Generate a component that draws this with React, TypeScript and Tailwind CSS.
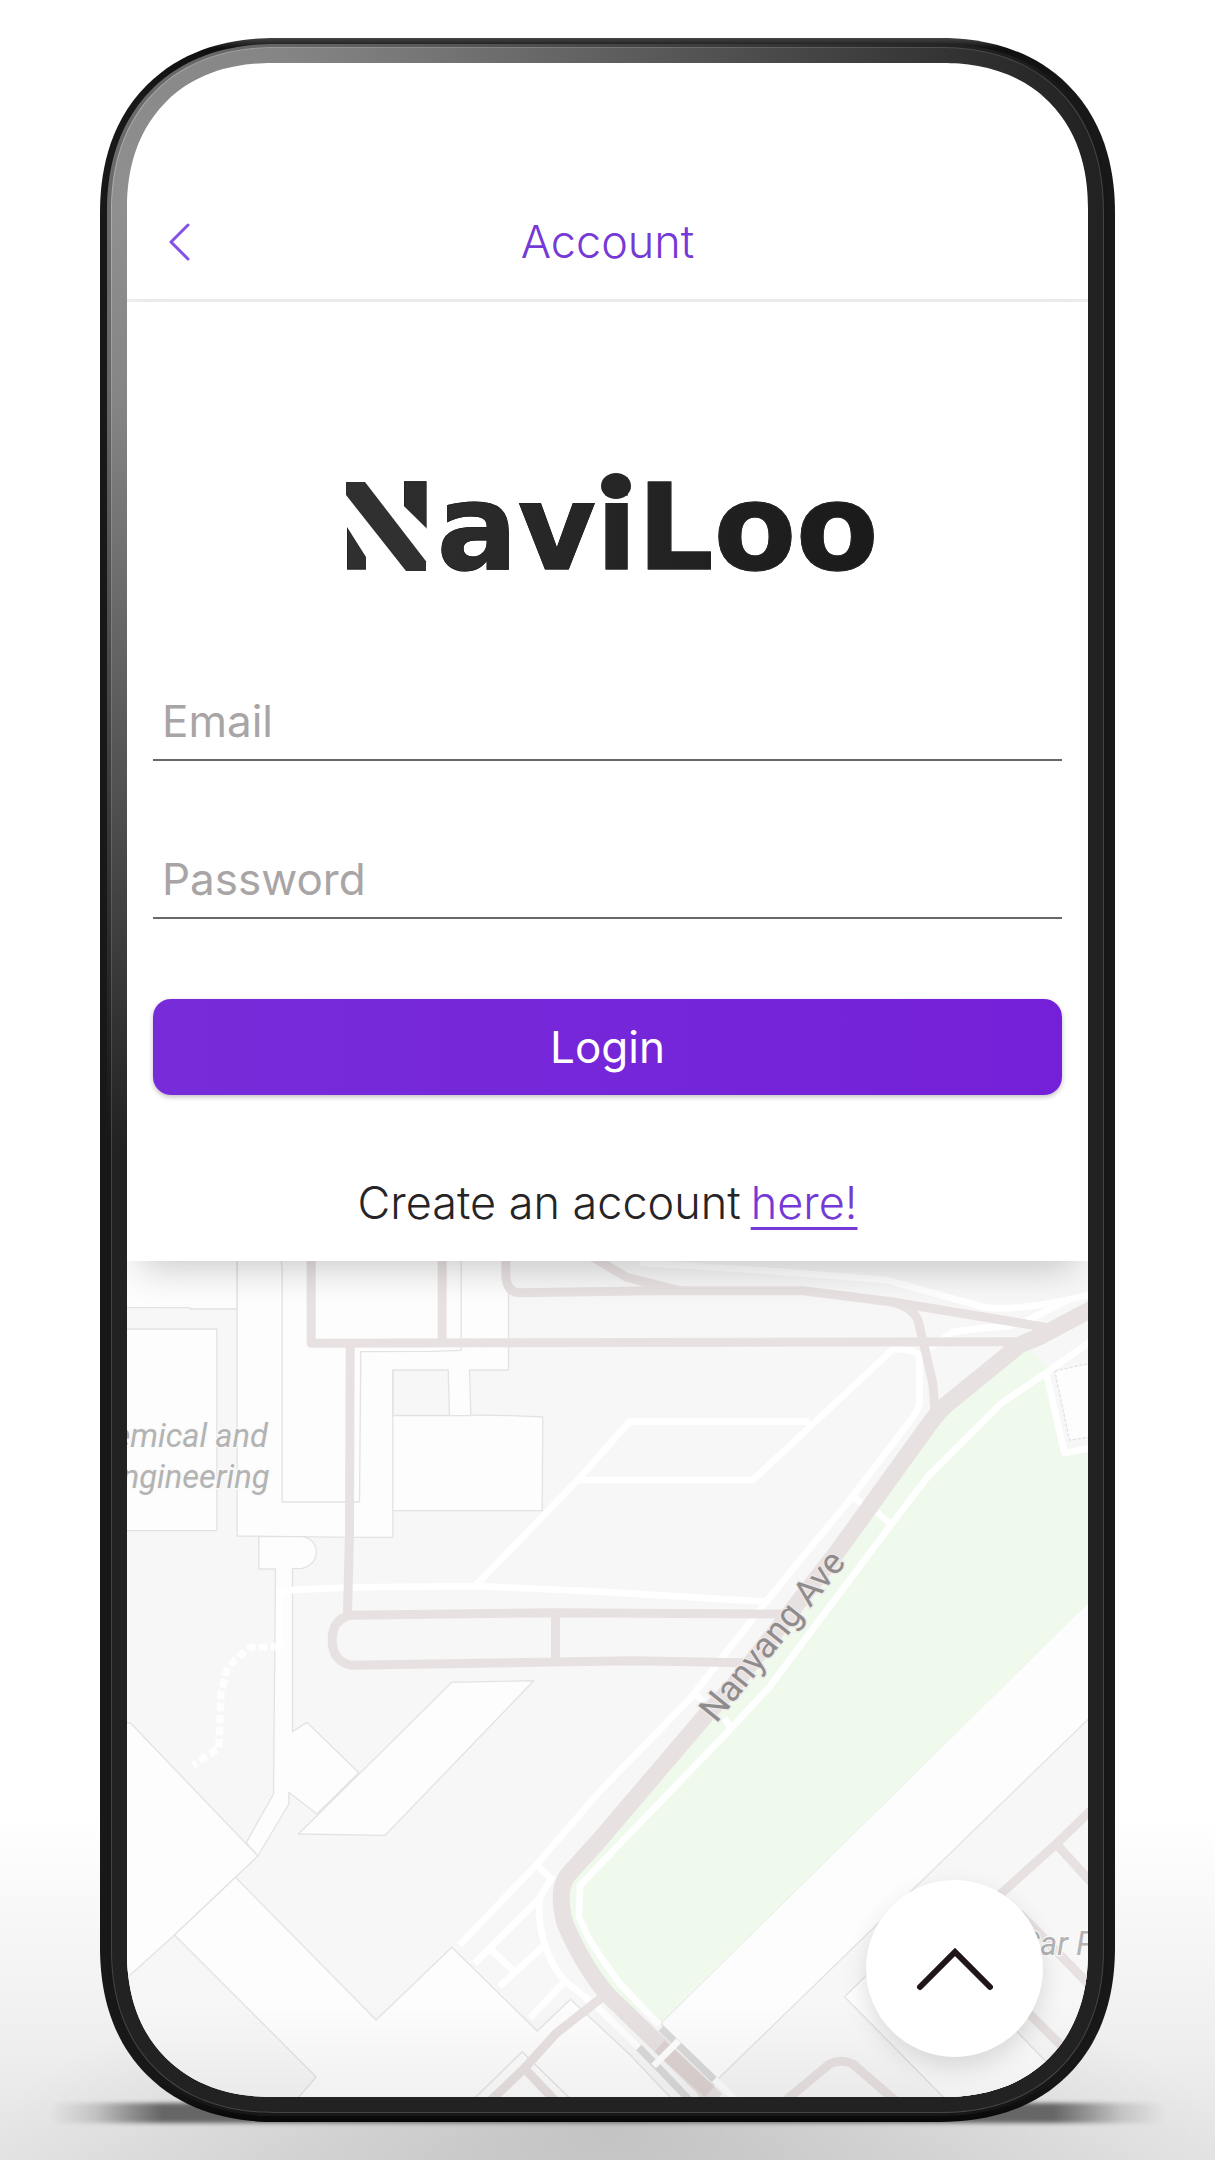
import React from "react";

const ROAD = "#e8e1e1";

function Buildings() {
  return (
    <g fill="#fdfdfd" stroke="#e3e3e3" strokeWidth="4" strokeLinejoin="round">
      <path d="M0 40H353V207H212V203H0Z" />
      <path d="M0 267H292V872H0Z" />
      <path d="M353 40H1167V390H1050L1054 525L1175 527L1270 531L1268 812H820V892H704L353 888Z" />
      <path d="M820 390H986L990 526H820Z" fill="#f7f7f7" />
      <path d="M820 527H1054M820 390V812M484 40L488 90V786H720L724 335L935 334L1025 331V40" fill="none" />
      <path d="M418 890V987H468L462 1662L380 1808L415 1848L508 1692V1657L592 1722L718 1598L562 1447L519 1475V986H545Q590 975 590 936Q590 900 550 890Z" />
      <path d="M0 1449H33L415 1848L348 1912L165 2085L21 2215H0Z" />
      <path d="M165 2085L348 1912L770 2340L997 2122L1253 2373L1353 2278L1530 2443L1660 2580H530L590 2511Z" />
      <path d="M1066 2574L1208 2435L1350 2574" fill="none" />
      <path d="M997 1327L1243 1322L797 1786L537 1782Z" />
      <path d="M2920 1072V1424L1740 2571L1625 2348Z" />
      <path d="M2175 2270L2330 2120L2560 2240L2790 2475V2590H2490Z" />
      <path d="M2806 393L2920 368V590L2850 600Z" strokeDasharray="10 5" />
    </g>
  );
}

function Park() {
  return (
    <path
      fill="#effaed"
      d="M2730 325L2785 385L2835 640L2920 622V1075L1625 2348L1465 2265L1345 2070L1325 1968L1345 1905L1440 1800L1755 1430L2150 940L2450 530Z"
    />
  );
}

function Footpaths() {
  return (
    <g fill="none" stroke="#ffffff" strokeWidth="20" strokeLinejoin="round">
      <path d="M2920 300L2780 398L2645 490L2425 710L2310 860L1950 1340L1835 1465L1440 1875L1382 1936L1378 2030L1405 2090L1440 2145L1500 2230L1620 2355" />
      <path d="M2780 398L2835 640L2920 622" />
      <path d="M2920 162Q2740 205 2640 205Q2600 205 2570 195L2300 120L1940 92L1560 68" />
      <path d="M2850 178L2720 244M2680 256Q2560 266 2500 276L2430 325" />
      <path d="M1070 1035L1375 720L1530 545H2070M1375 720H1900L2320 328Q2380 326 2400 346V490Q2396 510 2370 545L2190 780L1940 1085L1810 1250L1715 1372L1440 1655L1250 1875L1020 2115" />
      <path d="M480 1220V1052L690 1042L1070 1038L1440 1055L1940 1085" />
      <path d="M2195 765L2228 790M2272 817L2310 850M1730 1365L1752 1385M1815 1435L1835 1468" />
      <path d="M1250 1875L1295 1915L1260 1975L1065 2170M1260 1975Q1255 2050 1275 2110Q1300 2190 1345 2230L1410 2282M1115 2130L1185 2195M1275 2115L1140 2240M1335 2225L1230 2335" />
      <path d="M1430 2298L1560 2425" />
      <path d="M480 1220L390 1222L325 1280L305 1360L298 1525L220 1575" strokeWidth="22" strokeDasharray="26 10" opacity="0.8" />
    </g>
  );
}

function Roads() {
  return (
    <g fill="none" stroke={ROAD} strokeWidth="27" strokeLinejoin="round">
      <path d="M575 40V310L2690 305" />
      <path d="M968 40V310M692 310L690 880L684 1120" />
      <path d="M1990 1122L1300 1118L690 1126Q638 1140 638 1200Q638 1262 695 1276L1540 1262L1870 1268M1308 1120V1266" />
      <path d="M1159 40V110Q1163 155 1195 158L1600 152H2050L2320 186L2780 262" />
      <path d="M1400 40L1522 112L1680 152" />
      <path d="M2310 185Q2385 200 2398 250L2440 430L2447 520" />
      <path d="M1450 2270L1310 2380L1215 2485L1115 2580M1215 2485L1305 2580" />
      <path d="M2000 2580L2130 2472Q2165 2455 2200 2472L2325 2580" />
      <path d="M2920 1706L2810 1812L2640 1965M2810 1812L2920 1932M2700 2020L2910 2235M2700 2292L2840 2432" />
      <path
        d="M2930 200L2760 290L2700 315L2500 478Q2465 505 2435 545L2150 940L1840 1340L1755 1430L1440 1800L1345 1905Q1325 1935 1325 1968Q1325 2030 1345 2070Q1400 2190 1465 2265L1600 2395L1790 2580"
        strokeWidth="51"
      />
    </g>
  );
}

function Crossing() {
  return (
    <g fill="none">
      <path d="M1620 2418L1770 2555" stroke="#ded3d3" strokeWidth="44" />
      <path d="M1625 2365L1785 2520M1558 2422L1710 2580" stroke="#dadada" strokeWidth="22" />
      <path d="M1678 2402L1602 2478M1785 2518L1850 2580" stroke="#ffffff" strokeWidth="20" />
    </g>
  );
}

function MapLabels() {
  return (
    <g className="font-['Roboto',sans-serif] font-normal" stroke="#fafafa" strokeWidth="8" style={{ paintOrder: "stroke" }}>
      <g fill="#b3b3b3" fontStyle="italic" fontSize="98">
        <text x="445" y="622" textAnchor="end">Chemical and</text>
        <text x="450" y="744" textAnchor="end">Engineering</text>
        <text x="2700" y="2145">Car Park</text>
      </g>
      <text transform="translate(1790 1452) rotate(-51)" fontSize="107" fill="#8e8c8c" stroke="#efe8e8">
        Nanyang Ave
      </text>
    </g>
  );
}

function CampusMap() {
  return (
    <svg
      viewBox="21 63 2886 2508"
      preserveAspectRatio="xMidYMin slice"
      className="block h-[836px] w-full bg-[#f7f7f7]"
      role="img"
      aria-label="Campus map"
    >
      <Buildings />
      <Park />
      <Footpaths />
      <Roads />
      <Crossing />
      <MapLabels />
    </svg>
  );
}

function Logo() {
  return (
    <h1 className="relative bg-linear-to-r from-[#303030] to-[#1a1a1a] bg-clip-text font-['DejaVu_Sans',sans-serif] text-[120px] leading-[140px] font-bold text-transparent [-webkit-text-stroke:1px_#252525]">
      NaviLoo
      {/* stencil cut through the first letter, and the round dot */}
      <svg viewBox="0 0 80 82" preserveAspectRatio="none" className="absolute top-6 left-2.5 h-[89px] w-20 overflow-visible" aria-hidden="true">
        <path fill="#ffffff" d="M-2 -2H50V15L82 44V84H20V69L-2 37Z" />
        <path fill="#303030" d="M0 0H19L80 73V82H60L0 12Z" />
      </svg>
      <span className="absolute top-[15px] left-[265px] h-[26px] w-[30px] rounded-[50%] bg-[#262626]" />
    </h1>
  );
}

function Field({ label, type }: { label: string; type: string }) {
  return (
    <input
      type={type}
      aria-label={label}
      placeholder={label}
      className="h-[78px] w-full border-b-2 border-[#686868] bg-transparent px-[9px] text-[44px] font-normal outline-none placeholder:text-[#a9a5a6]"
    />
  );
}

export default function App() {
  return (
    <div className="relative min-h-screen bg-[linear-gradient(to_bottom,#ffffff_84%,#eeeeee_95%,#e2e2e2_100%)] px-[100px] pt-[38px] pb-[38px] font-['Inter',sans-serif] text-[45px] leading-[56px] font-light">
      <div className="absolute inset-x-0 bottom-0 h-[280px] bg-[radial-gradient(ellipse_50%_60%_at_50%_90%,#00000026,transparent)]" />
      <div className="absolute inset-x-[50px] bottom-[37px] h-5 bg-[linear-gradient(to_right,transparent,#00000022_4%,#666666_10%,#666666_90%,#00000022_96%,transparent)] blur-[2px]" />

      <div className="relative rounded-[175px] bg-[linear-gradient(to_bottom,#444444,#101010_10px,#181818_60px,#181818_98%,#080808)] px-[7px] py-[6px] [corner-shape:superellipse(1.15)]">
        <div className="rounded-[168px] bg-[radial-gradient(circle_at_30px_150px,#6c6c6c,#666666_200px,#171717_950px)] px-1 py-[3px] [corner-shape:superellipse(1.15)]">
          <div className="rounded-[164px] bg-[radial-gradient(circle_at_30px_150px,#b0b0b0,#9a9a9a_200px,#444444_900px)] p-px [corner-shape:superellipse(1.15)]">
            <div className="rounded-[163px] bg-[radial-gradient(circle_at_30px_150px,#909090,#858585_200px,#222222_950px)] p-[15px] [corner-shape:superellipse(1.15)]">
              <main className="relative overflow-hidden rounded-[145px] bg-white [corner-shape:superellipse(1.15)]">
                <header className="grid grid-cols-[1fr_auto_1fr] items-center border-b-3 border-[#ececec] px-10 pt-[151px] pb-[29px] text-[#7539d6]">
                  <button type="button" aria-label="Back" className="justify-self-start">
                    <svg viewBox="0 0 24 40" className="h-10 w-6" fill="none" stroke="#8450e6" strokeWidth="3" strokeLinecap="round" strokeLinejoin="round">
                      <path d="M21 3L4 20L21 37" />
                    </svg>
                  </button>
                  <h2>Account</h2>
                </header>

                <section className="relative z-10 flex flex-col items-center bg-white px-[26px] pt-[156px] pb-[30px] shadow-[0_20px_36px_-14px_#00000038]">
                  <Logo />
                  <form className="flex w-full flex-col gap-20 pt-[85px]" onSubmit={(e) => e.preventDefault()}>
                    <Field label="Email" type="email" />
                    <Field label="Password" type="password" />
                    <button type="submit" className="h-24 rounded-[18px] bg-linear-to-r from-[#772cda] to-[#7420d8] text-[44px] font-normal text-white shadow-[0_2px_5px_#00000040]">
                      Login
                    </button>
                  </form>
                  <p className="flex gap-2.5 pt-20 text-[#262426]">
                    Create an account
                    <a href="#register" className="text-[#7539d6] underline decoration-3 underline-offset-8">here!</a>
                  </p>
                </section>

                <div className="relative">
                  <CampusMap />
                  <div className="absolute inset-x-0 bottom-0 h-24 bg-linear-to-b from-transparent to-black/5" />
                  <button
                    type="button"
                    aria-label="Expand"
                    className="absolute right-[45px] bottom-10 flex size-[177px] items-center justify-center rounded-full bg-white shadow-[0_10px_24px_#00000020]"
                  >
                    <svg viewBox="0 0 80 44" className="h-11 w-20" fill="none" stroke="#201619" strokeWidth="6" strokeLinecap="round" strokeLinejoin="miter">
                      <path d="M5 40L40 5L75 40" />
                    </svg>
                  </button>
                </div>
              </main>
            </div>
          </div>
        </div>
      </div>
    </div>
  );
}
